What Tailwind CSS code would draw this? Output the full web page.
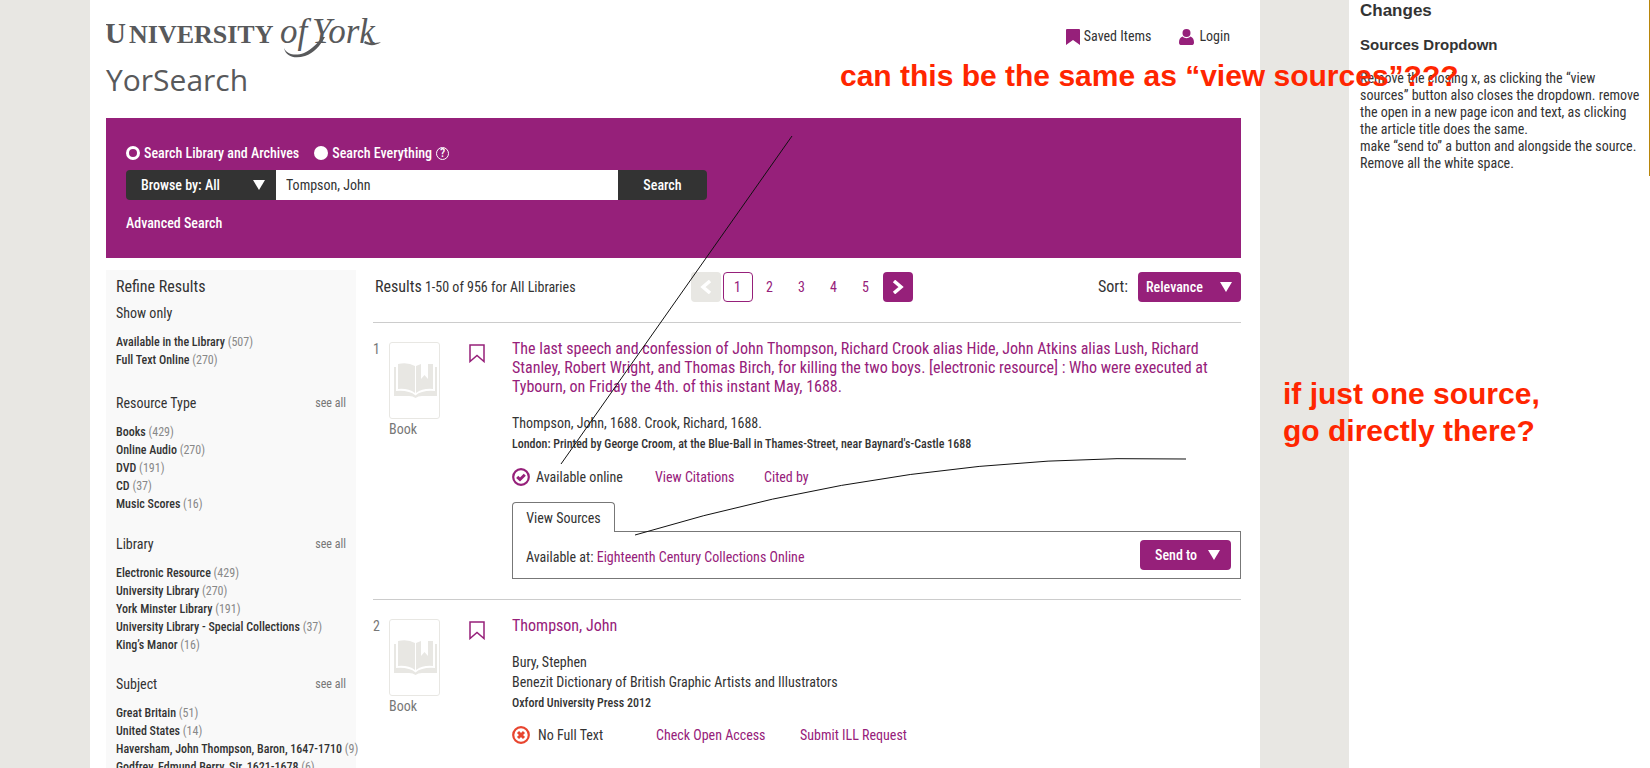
<!DOCTYPE html>
<html lang="en">
<head>
<meta charset="utf-8">
<title>YorSearch</title>
<script src="https://cdn.jsdelivr.net/npm/@tailwindcss/browser@4"></script>
</head>
<body class="bg-white text-[#333] font-['Roboto_Condensed','Arial_Narrow','Liberation_Sans',sans-serif]">
<div class="relative flex h-screen overflow-hidden">
  <div class="w-[90px] shrink-0 bg-[#e8e7e3]"></div>

  <div class="flex-1 min-w-0 pl-4 pr-[19px]">
    <header class="flex h-[118px] justify-between">
      <div>
        <a href="#" aria-label="University of York" class="block h-[60px]">
          <svg class="block" width="280" height="60" viewBox="0 0 280 60" fill="#58595b">
            <text x="-1" y="43" font-family="Liberation Serif, serif" font-weight="700" font-size="29">U</text>
            <text x="23" y="43" font-family="Liberation Serif, serif" font-weight="700" font-size="26">NIVERSITY</text>
            <text x="174" y="43" font-family="Liberation Serif, serif" font-style="italic" font-size="35">of</text>
            <text x="206" y="43" font-family="Liberation Serif, serif" font-style="italic" font-size="35">York</text>
            <path d="M178 48c3 7 12 8 20 5 8-4 14-10 18-16h3c-5 9-11 16-20 19-10 3-19 1-21-8z"/>
            <path d="M259 41c4 2 8 3 16 1-5 4-12 4-17 1z"/>
          </svg>
        </a>
        <h1 class="font-['Open_Sans',sans-serif] text-[30px] leading-10 text-[#58595b]">YorSearch</h1>
      </div>
      <nav class="flex h-9 gap-7 pt-[27px] pr-[11px] text-sm leading-[18px]">
        <a href="#" class="flex gap-1">
          <svg class="mt-[2px]" width="14" height="16" viewBox="0 0 14 16" fill="#96207a"><path d="M0 1q0-1 1-1h12q1 0 1 1v15l-7-5-7 5z"/></svg>
          Saved Items
        </a>
        <a href="#" class="flex gap-[5px]">
          <svg class="mt-[2px]" width="15" height="16" viewBox="0 0 15 16" fill="#96207a"><circle cx="7.500" cy="4" r="4"/><path d="M3.500 7.500C1 8.500 0 10.500 0 13.500 0 15.500 1 16 2.500 16h10c1.500 0 2.500-.5 2.500-2.500 0-3-1-5-3.500-6C9 9.800 6 9.800 3.500 7.500z"/></svg>
          Login
        </a>
      </nav>
    </header>

    <form class="flex h-[140px] flex-col bg-[#96207a] px-5 pt-[26px] text-sm font-medium text-white" onsubmit="return false">
      <div class="flex h-[18px] items-center">
        <input id="scope-library" name="scope" type="radio" checked class="size-[14px] appearance-none rounded-full bg-white checked:border-[3px] checked:border-white checked:bg-[#96207a]">
        <label for="scope-library" class="ml-1">Search Library and Archives</label>
        <input id="scope-all" name="scope" type="radio" class="ml-[15px] size-[14px] appearance-none rounded-full bg-white checked:border-[3px] checked:border-white checked:bg-[#96207a]">
        <label for="scope-all" class="ml-1">Search Everything</label>
        <button type="button" aria-label="Help" class="ml-1 flex size-[13px] items-center justify-center rounded-full border border-white text-[12px] leading-none">?</button>
      </div>
      <div class="mt-2 flex h-[30px]">
        <div class="relative w-[150px]">
          <select aria-label="Browse by" class="h-full w-full appearance-none rounded-l-sm bg-[#333] pl-[15px] text-white"><option>Browse by: All</option></select>
          <svg class="pointer-events-none absolute top-[10px] right-[11px]" width="12" height="10" viewBox="0 0 12 10" fill="#fff"><path d="M0 0h12L6 10z"/></svg>
        </div>
        <input aria-label="Search terms" type="text" value="Tompson, John" class="w-[342px] bg-white px-[10px] font-normal text-[#333]">
        <button class="w-[89px] rounded-r-sm bg-[#333]">Search</button>
      </div>
      <a href="#" class="mt-[14px] self-start leading-[18px]">Advanced Search</a>
    </form>

    <div class="mt-3 flex gap-[17px]">
      <aside class="w-[250px] shrink-0 bg-[#f9f9f9] px-[10px] pt-[7px] text-xs leading-[18px] whitespace-nowrap">
        <h2 class="text-base leading-5">Refine Results</h2>
        <section class="mb-[25px]">
          <h3 class="pt-[7px] text-sm leading-[18px]">Show only</h3>
          <ul class="mt-[11px]">
            <li><a href="#" class="font-medium">Available in the Library</a> <span class="text-[#888]">(507)</span></li>
            <li><a href="#" class="font-medium">Full Text Online</a> <span class="text-[#888]">(270)</span></li>
          </ul>
        </section>
        <section class="mb-[22px]">
          <div class="flex justify-between"><h3 class="text-sm leading-[18px]">Resource Type</h3><a href="#" class="text-[#777]">see all</a></div>
          <ul class="mt-[11px]">
            <li><a href="#" class="font-medium">Books</a> <span class="text-[#888]">(429)</span></li>
            <li><a href="#" class="font-medium">Online Audio</a> <span class="text-[#888]">(270)</span></li>
            <li><a href="#" class="font-medium">DVD</a> <span class="text-[#888]">(191)</span></li>
            <li><a href="#" class="font-medium">CD</a> <span class="text-[#888]">(37)</span></li>
            <li><a href="#" class="font-medium">Music Scores</a> <span class="text-[#888]">(16)</span></li>
          </ul>
        </section>
        <section class="mb-[21px]">
          <div class="flex justify-between"><h3 class="text-sm leading-[18px]">Library</h3><a href="#" class="text-[#777]">see all</a></div>
          <ul class="mt-[11px]">
            <li><a href="#" class="font-medium">Electronic Resource</a> <span class="text-[#888]">(429)</span></li>
            <li><a href="#" class="font-medium">University Library</a> <span class="text-[#888]">(270)</span></li>
            <li><a href="#" class="font-medium">York Minster Library</a> <span class="text-[#888]">(191)</span></li>
            <li><a href="#" class="font-medium">University Library - Special Collections</a> <span class="text-[#888]">(37)</span></li>
            <li><a href="#" class="font-medium">King’s Manor</a> <span class="text-[#888]">(16)</span></li>
          </ul>
        </section>
        <section>
          <div class="flex justify-between"><h3 class="text-sm leading-[18px]">Subject</h3><a href="#" class="text-[#777]">see all</a></div>
          <ul class="mt-[11px]">
            <li><a href="#" class="font-medium">Great Britain</a> <span class="text-[#888]">(51)</span></li>
            <li><a href="#" class="font-medium">United States</a> <span class="text-[#888]">(14)</span></li>
            <li><a href="#" class="font-medium">Haversham, John Thompson, Baron, 1647-1710</a> <span class="text-[#888]">(9)</span></li>
            <li><a href="#" class="font-medium">Godfrey, Edmund Berry, Sir, 1621-1678</a> <span class="text-[#888]">(6)</span></li>
          </ul>
        </section>
      </aside>

      <main class="min-w-0 flex-1 text-sm leading-5">
        <div class="mt-[2px] flex h-[30px] items-center justify-between pl-[2px]">
          <h2 class="w-[315px]"><span class="text-base">Results</span> 1-50 of 956 for All Libraries</h2>
          <nav aria-label="Pages" class="flex gap-[2px] text-center leading-[30px] text-[#96207a]">
            <button disabled aria-label="Previous page" class="flex size-[30px] items-center justify-center rounded-sm bg-[#e8e7e3]"><svg width="12" height="14" viewBox="0 0 12 14" fill="none" stroke="#fff" stroke-width="3.500"><path d="M10 1L3 7l7 6"/></svg></button>
            <a href="#" aria-current="page" class="size-[30px] rounded-sm border border-[#96207a] leading-7">1</a>
            <a href="#" class="size-[30px]">2</a>
            <a href="#" class="size-[30px]">3</a>
            <a href="#" class="size-[30px]">4</a>
            <a href="#" class="size-[30px]">5</a>
            <button aria-label="Next page" class="flex size-[30px] items-center justify-center rounded-sm bg-[#96207a]"><svg width="12" height="14" viewBox="0 0 12 14" fill="none" stroke="#fff" stroke-width="3.500"><path d="M2 1l7 6-7 6"/></svg></button>
          </nav>
          <div class="flex w-[328px] items-center justify-end gap-[10px]">
            <label for="sort" class="text-base">Sort:</label>
            <div class="relative">
              <select id="sort" class="block h-[30px] w-[103px] appearance-none rounded-sm bg-[#96207a] pl-2 font-medium text-white"><option>Relevance</option></select>
              <svg class="pointer-events-none absolute top-[10px] right-[9px]" width="12" height="10" viewBox="0 0 12 10" fill="#fff"><path d="M0 0h12L6 10z"/></svg>
            </div>
          </div>
        </div>

        <article class="mt-5 flex border-t border-[#ccc] pt-[19px]">
          <div class="w-4 leading-[14px] text-[#777]">1</div>
          <div class="w-20 text-[#777]">
            <svg class="block" width="51" height="77" viewBox="0 0 51 77"><rect x=".5" y=".5" width="50" height="76" rx="2.500" fill="#fff" stroke="#e8e7e3"/><g fill="#e8e7e3"><path d="M9 22q10-2 17 2v27q-7-5-17-4z"/><path d="M27 24l5-2v15l3.500-4 3.500 4V22h5v25q-10-1-17 4z"/><path d="M5 25h2v24q13-1 19.500 4.500Q33 48 46 49V25h2v29H33q-4 0-6.500 2Q24 54 20 54H5z"/></g></svg>
            <div>Book</div>
          </div>
          <button aria-label="Save item" class="w-[43px] self-start pt-[2px]"><svg width="16" height="19" viewBox="0 0 16 19" fill="none" stroke="#96207a" stroke-width="1.500"><path d="M1 1h14v16.500l-7-6-7 6z"/></svg></button>
          <div class="min-w-0 flex-1">
            <h3 class="-mt-[3px] text-base leading-[19px]"><a href="#" class="text-[#96207a]">The last speech and confession of John Thompson, Richard Crook alias Hide, John Atkins alias Lush, Richard Stanley, Robert Wright, and Thomas Birch, for killing the two boys. [electronic resource] : Who were executed at Tybourn, on Friday the 4th. of this instant May, 1688.</a></h3>
            <p class="mt-[17px]">Thompson, John, 1688. Crook, Richard, 1688.</p>
            <p class="text-xs leading-[22px] font-medium">London: Printed by George Croom, at the Blue-Ball in Thames-Street, near Baynard's-Castle 1688</p>
            <div class="mt-3 flex items-center">
              <svg width="18" height="18" viewBox="0 0 18 18" fill="none" stroke="#96207a"><circle cx="9" cy="9" r="7.800" stroke-width="2.200"/><path d="M5.200 8.800l2.800 2.700 4.800-4.700" stroke-width="3"/></svg>
              <span class="ml-[6px] w-[119px]">Available online</span>
              <a href="#" class="w-[109px] text-[#96207a]">View Citations</a>
              <a href="#" class="text-[#96207a]">Cited by</a>
            </div>
            <button class="relative z-10 mt-[15px] -mb-px block h-[30px] w-[103px] rounded-t-sm border border-b-0 border-[#777] bg-white">View Sources</button>
            <div class="flex h-12 items-center justify-between border border-[#777] pr-[9px] pl-[13px]">
              <p class="mt-1">Available at: <a href="#" class="text-[#96207a]">Eighteenth Century Collections Online</a></p>
              <button class="flex h-[30px] w-[91px] items-center justify-between rounded-sm bg-[#96207a] pr-[11px] pl-[15px] font-medium text-white">Send to <svg width="12" height="10" viewBox="0 0 12 10" fill="#fff"><path d="M0 0h12L6 10z"/></svg></button>
            </div>
          </div>
        </article>

        <article class="mt-5 flex border-t border-[#ccc] pt-[19px]">
          <div class="w-4 leading-[14px] text-[#777]">2</div>
          <div class="w-20 text-[#777]">
            <svg class="block" width="51" height="77" viewBox="0 0 51 77"><rect x=".5" y=".5" width="50" height="76" rx="2.500" fill="#fff" stroke="#e8e7e3"/><g fill="#e8e7e3"><path d="M9 22q10-2 17 2v27q-7-5-17-4z"/><path d="M27 24l5-2v15l3.500-4 3.500 4V22h5v25q-10-1-17 4z"/><path d="M5 25h2v24q13-1 19.500 4.500Q33 48 46 49V25h2v29H33q-4 0-6.500 2Q24 54 20 54H5z"/></g></svg>
            <div>Book</div>
          </div>
          <button aria-label="Save item" class="w-[43px] self-start pt-[2px]"><svg width="16" height="19" viewBox="0 0 16 19" fill="none" stroke="#96207a" stroke-width="1.500"><path d="M1 1h14v16.500l-7-6-7 6z"/></svg></button>
          <div class="min-w-0 flex-1">
            <h3 class="-mt-[3px] text-base leading-[19px]"><a href="#" class="text-[#96207a]">Thompson, John</a></h3>
            <p class="mt-[17px]">Bury, Stephen</p>
            <p>Benezit Dictionary of British Graphic Artists and Illustrators</p>
            <p class="text-xs leading-[22px] font-medium">Oxford University Press 2012</p>
            <div class="mt-[11px] flex items-center">
              <svg width="18" height="18" viewBox="0 0 18 18" fill="none" stroke="#e8452f"><circle cx="9" cy="9" r="7.800" stroke-width="2.200"/><path d="M6 6l6 6M12 6l-6 6" stroke-width="3"/></svg>
              <span class="ml-2 w-[118px]">No Full Text</span>
              <a href="#" class="w-[144px] text-[#96207a]">Check Open Access</a>
              <a href="#" class="text-[#96207a]">Submit ILL Request</a>
            </div>
          </div>
        </article>
      </main>
    </div>
  </div>

  <div class="w-[89px] shrink-0 bg-[#e8e7e3]"></div>

  <aside class="w-[301px] shrink-0">
    <div class="h-44 border-r border-[#b8860b] pt-px pl-[11px] text-sm leading-[17px]">
      <h2 class="font-['Liberation_Sans',sans-serif] text-[17px] leading-5 font-bold">Changes</h2>
      <h3 class="mt-[14px] font-['Liberation_Sans',sans-serif] text-[15px] leading-5 font-bold">Sources Dropdown</h3>
      <p class="mt-[15px] w-[284px]">Remove the closing x, as clicking the “view sources” button also closes the dropdown. remove the open in a new page icon and text, as clicking the article title does the same.<br>make “send to” a button and alongside the source. Remove all the white space.</p>
    </div>
  </aside>

  <!-- review notes laid over the page -->
  <div class="pointer-events-none absolute inset-0 z-20 font-['Liberation_Sans',sans-serif] text-3xl leading-[37px] font-bold text-[#ff2600]">
    <svg class="absolute inset-0" width="1650" height="768" fill="none" stroke="#111"><path d="M792 136L561 464"/><path d="M635 535Q910 452 1186 459"/></svg>
    <p class="absolute top-[57px] left-[840px] whitespace-nowrap">can this be the same as “view sources”???</p>
    <p class="absolute top-[375px] left-[1283px] whitespace-nowrap">if just one source,<br>go directly there?</p>
  </div>
</div>
</body>
</html>
